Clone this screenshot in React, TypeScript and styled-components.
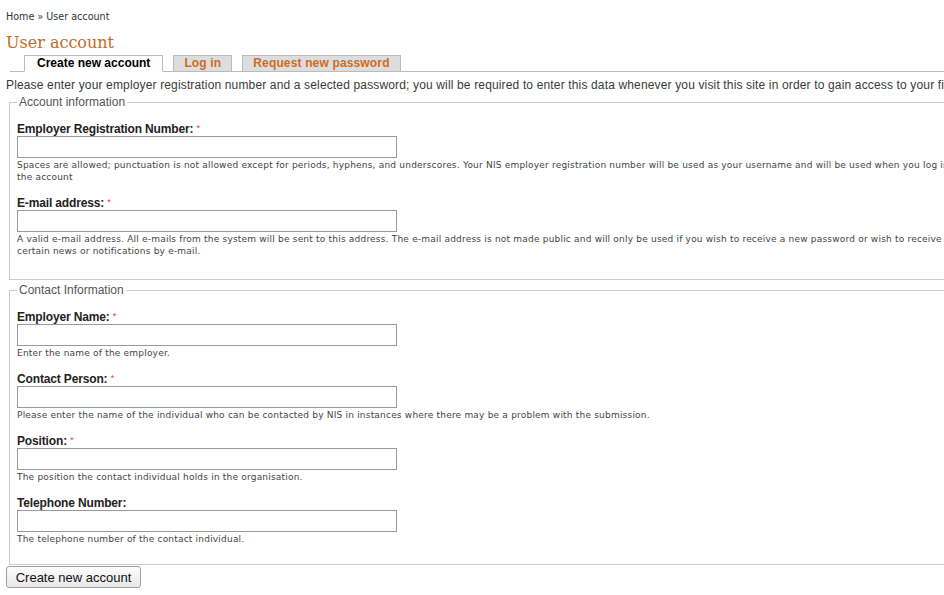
import React from "react";
import styled, { createGlobalStyle } from "styled-components";

const Global = createGlobalStyle`
  html, body { margin: 0; padding: 0; background: #fff; overflow: hidden; }
  body { font-family: "Liberation Sans", Arial, sans-serif; }
`;

const Page = styled.div`
  width: 970px;
  padding: 11px 0 0 6px;
`;

const Breadcrumb = styled.div`
  font-family: "DejaVu Sans", Verdana, sans-serif;
  font-size: 9.6px;
  line-height: 12px;
  color: #333;
`;

const Title = styled.h2`
  margin: 10px 0 0;
  font-family: "DejaVu Serif", Georgia, serif;
  font-weight: normal;
  font-size: 16px;
  line-height: 20px;
  color: #c96a1c;
`;

const TabRow = styled.ul`
  list-style: none;
  display: flex;
  align-items: flex-end;
  gap: 10px;
  margin: 2px 0 0 4px;
  padding: 0 0 0 14px;
  border-bottom: 1px solid #bbb;
  height: 16px;
`;

const Tab = styled.li<{ $active?: boolean }>`
  box-sizing: border-box;
  height: ${(p) => (p.$active ? "17px" : "16px")};
  margin-bottom: ${(p) => (p.$active ? "-1px" : "0")};
  padding: 0 ${(p) => (p.$active ? "12px" : "10px")};
  border: 1px solid #bbb;
  border-bottom: ${(p) => (p.$active ? "1px solid #fff" : "none")};
  background: ${(p) => (p.$active ? "#fff" : "#ddd")};
  font-size: 12px;
  font-weight: bold;
  line-height: 14px;
  letter-spacing: ${(p) => (p.$active ? "0" : "0.15px")};
  color: ${(p) => (p.$active ? "#000" : "#cc6c1f")};
  white-space: nowrap;
`;

const Intro = styled.p`
  margin: 6px 0 3px;
  font-size: 12px;
  line-height: 14px;
  letter-spacing: 0.15px;
  color: #3a3a3a;
  white-space: nowrap;
`;

const Fieldset = styled.fieldset`
  margin: 0 0 3px 3px;
  padding: 13px 8px 9px 7px;
  border: 1px solid #ccc;
  min-width: 0;

  &:last-of-type {
    padding-bottom: 6px;
    margin-bottom: 0;
  }
`;

const Legend = styled.legend`
  padding: 0 2px;
  font-size: 12px;
  line-height: 14px;
  color: #555;
`;

const Field = styled.div`
  margin-bottom: 13px;
`;

const Label = styled.label`
  display: block;
  height: 14px;
  font-size: 12px;
  font-weight: bold;
  line-height: 14px;
  letter-spacing: -0.15px;
  color: #222;
`;

const Required = styled.span`
  color: #ee3333;
  font-weight: normal;
  font-size: 9px;
  vertical-align: top;
  line-height: 12px;
`;

const Input = styled.input`
  display: block;
  box-sizing: border-box;
  width: 380px;
  height: 22px;
  margin: 0;
  border: 1px solid #9a9a9a;
  background: #fff;
  outline: none;
`;

const Description = styled.div`
  margin-top: 1px;
  font-family: "DejaVu Sans", Verdana, sans-serif;
  font-size: 9px;
  letter-spacing: 0.2px;
  line-height: 12px;
  color: #444;
`;

const SubmitButton = styled.button`
  display: block;
  box-sizing: border-box;
  width: 135px;
  height: 22px;
  margin: 1px 0 0;
  padding: 0;
  border: 1px solid #a0a0a0;
  border-radius: 3px;
  background: linear-gradient(#fdfdfd, #e8e8e8);
  font-family: "Liberation Sans", Arial, sans-serif;
  font-size: 13px;
  color: #111;
`;

type FieldDef = { label: string; required: boolean; desc: string };

const account: FieldDef[] = [
  {
    label: "Employer Registration Number:",
    required: true,
    desc:
      "Spaces are allowed; punctuation is not allowed except for periods, hyphens, and underscores. Your NIS employer registration number will be used as your username and will be used when you log into the account",
  },
  {
    label: "E-mail address:",
    required: true,
    desc:
      "A valid e-mail address. All e-mails from the system will be sent to this address. The e-mail address is not made public and will only be used if you wish to receive a new password or wish to receive certain news or notifications by e-mail.",
  },
];

const contact: FieldDef[] = [
  { label: "Employer Name:", required: true, desc: "Enter the name of the employer." },
  {
    label: "Contact Person:",
    required: true,
    desc: "Please enter the name of the individual who can be contacted by NIS in instances where there may be a problem with the submission.",
  },
  { label: "Position:", required: true, desc: "The position the contact individual holds in the organisation." },
  { label: "Telephone Number:", required: false, desc: "The telephone number of the contact individual." },
];

const renderField = (f: FieldDef) => (
  <Field key={f.label}>
    <Label>
      {f.label}
      {f.required && (
        <>
          {" "}
          <Required>*</Required>
        </>
      )}
    </Label>
    <Input type="text" />
    <Description>{f.desc}</Description>
  </Field>
);

export default function App() {
  return (
    <>
      <Global />
      <Page>
        <Breadcrumb>Home » User account</Breadcrumb>
        <Title>User account</Title>
        <TabRow>
          <Tab $active>Create new account</Tab>
          <Tab>Log in</Tab>
          <Tab>Request new password</Tab>
        </TabRow>
        <Intro>
          Please enter your employer registration number and a selected password; you will be required to enter this data whenever you visit this site in order to gain access to your files.
        </Intro>
        <Fieldset>
          <Legend>Account information</Legend>
          {account.map(renderField)}
        </Fieldset>
        <Fieldset>
          <Legend>Contact Information</Legend>
          {contact.map(renderField)}
        </Fieldset>
        <SubmitButton type="button">Create new account</SubmitButton>
      </Page>
    </>
  );
}
